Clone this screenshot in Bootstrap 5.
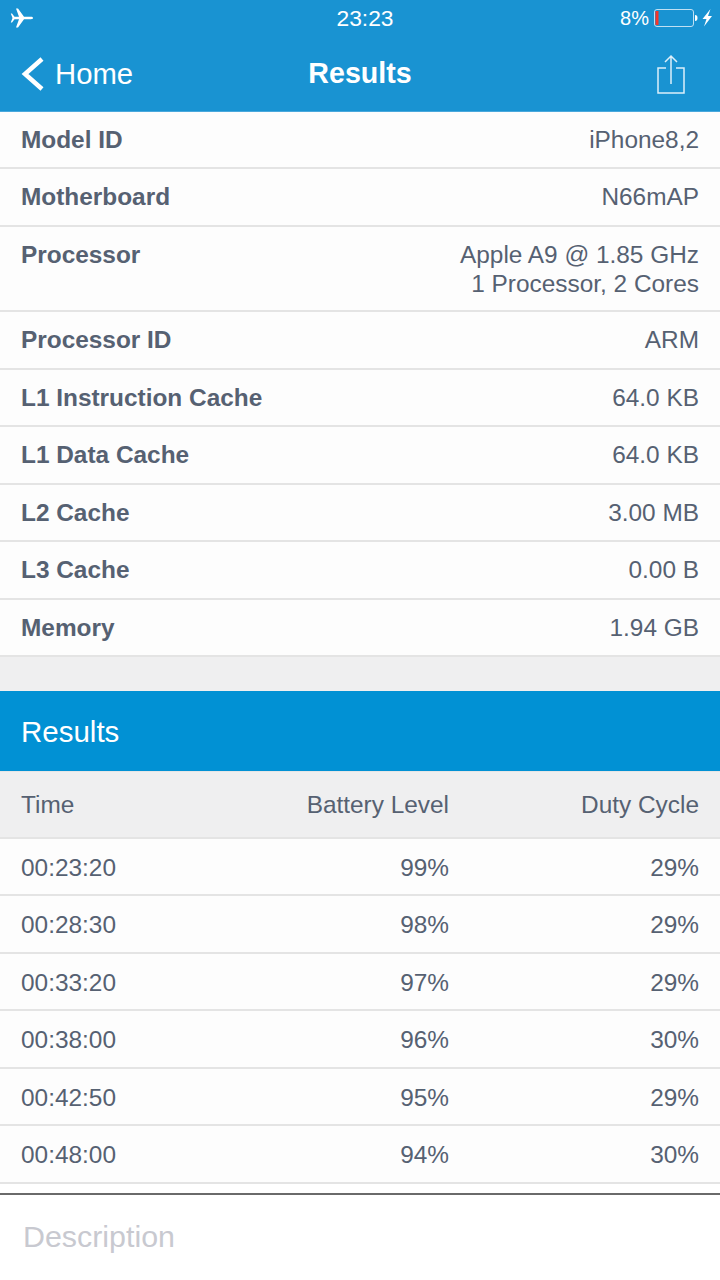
<!DOCTYPE html>
<html lang="en">
<head>
<meta charset="utf-8">
<title>Results</title>
<link rel="stylesheet" href="https://cdn.jsdelivr.net/npm/bootstrap@5.3.0/dist/css/bootstrap.min.css">
<style>
html,body{margin:0;height:1280px;overflow:hidden}
body{width:720px;background:#fff;font-family:"Liberation Sans",Arial,sans-serif;font-size:24.4px;color:#566172}
.top-head{height:112px;background:#1993d2;color:#fff;border-bottom:1px solid #4aa8dc}
.status-line{height:36px;padding:0 8px 0 10px;font-size:20px;line-height:36px}
.status-line>*{flex:1 1 0}
.clock-text{font-size:22.8px;margin-left:8px}
.nav-line{height:75px;padding:0 21px;font-size:28px}
.nav-line>*{flex:1 1 0}
.home-text{font-size:29.3px;margin-left:10px}
.head-title{font-weight:700;font-size:28.6px;text-align:center}
.share-icon{margin-right:13px}
.batt-icon{margin-left:5px}
.info-row{padding:0 21px;height:57.45px;line-height:56.6px;background:#fdfdfd;border-bottom:2px solid #e4e4e4}
.info-row.tall{height:85.5px}
.info-row .lbl{font-weight:700}
.info-row .two-line{line-height:28.5px;padding-top:14.5px;text-align:right}
.gap-band{height:34.4px;background:#efeff0}
.section-blue{height:80px;background:#0191d4;color:#fff;font-size:29.5px;line-height:81px;padding:0 21px}
.cols-row{display:flex;padding:0 21px;height:57.45px;line-height:57.5px;background:#fdfdfd;border-bottom:2px solid #e4e4e4}
.cols-row.head-row{height:67.5px;line-height:66px;background:#efeff0;border-top:1px solid #e6e6e6}
.c-time{width:178px}
.c-val{width:250px;text-align:right}
.desc-box{height:86px;margin-top:9.5px;border-top:2px solid #6a6a6a;background:#fff;padding:20px 23px 0;font-size:30.4px;line-height:42px;color:#c8c9d0}
svg{display:block}
</style>
</head>
<body>
<header class="top-head">
  <div class="status-line d-flex align-items-center">
    <div><svg width="24" height="20" viewBox="0 0 24 20" fill="#fff"><path d="M23 10c0-.8-1-1.200-2-1.200h-7L8 .5H6l3 8.300H4.500L2 5.500H.8L2.500 10 .8 14.500H2l2.500-3.300H9l-3 8.300h2l6-8.300h7c1 0 2-.4 2-1.200z"/></svg></div>
    <div class="clock-text text-center">23:23</div>
    <div class="d-flex justify-content-end align-items-center">
      <span>8%</span>
      <svg class="batt-icon" width="58" height="18" viewBox="0 0 58 18"><rect x=".5" y=".5" width="39" height="17" rx="2.500" fill="none" stroke="#bfe0f3" stroke-width="1"/><rect x="1.500" y="2" width="3" height="14" fill="#f5352a"/><path d="M41 6c1.800 0 2.500 1 2.500 3s-.7 3-2.500 3z" fill="#fff"/><path d="M56.500 0l-8 10h4L50 17.500l8-10.500h-4z" fill="#fff"/></svg>
    </div>
  </div>
  <div class="nav-line d-flex align-items-center">
    <div class="d-flex align-items-center">
      <svg width="24" height="36" viewBox="0 0 24 36"><path d="M21 3L4 18l17 15" fill="none" stroke="#fff" stroke-width="4.500"/></svg>
      <span class="home-text">Home</span>
    </div>
    <div class="head-title">Results</div>
    <div class="d-flex justify-content-end">
      <svg class="share-icon" width="30" height="40" viewBox="0 0 30 40" fill="none" stroke="#dceffa" stroke-width="1.500"><path d="M10 14H2v25h26V14h-8"/><path d="M15 30V2M9 8l6-6 6 6"/></svg>
    </div>
  </div>
</header>
<main>
  <div class="info-row d-flex justify-content-between"><span class="lbl">Model ID</span><span>iPhone8,2</span></div>
  <div class="info-row d-flex justify-content-between"><span class="lbl">Motherboard</span><span>N66mAP</span></div>
  <div class="info-row tall d-flex justify-content-between"><span class="lbl">Processor</span><div class="two-line">Apple A9 @ 1.85 GHz<br>1 Processor, 2 Cores</div></div>
  <div class="info-row d-flex justify-content-between"><span class="lbl">Processor ID</span><span>ARM</span></div>
  <div class="info-row d-flex justify-content-between"><span class="lbl">L1 Instruction Cache</span><span>64.0 KB</span></div>
  <div class="info-row d-flex justify-content-between"><span class="lbl">L1 Data Cache</span><span>64.0 KB</span></div>
  <div class="info-row d-flex justify-content-between"><span class="lbl">L2 Cache</span><span>3.00 MB</span></div>
  <div class="info-row d-flex justify-content-between"><span class="lbl">L3 Cache</span><span>0.00 B</span></div>
  <div class="info-row d-flex justify-content-between"><span class="lbl">Memory</span><span>1.94 GB</span></div>
  <div class="gap-band"></div>
  <div class="section-blue">Results</div>
  <div class="cols-row head-row"><div class="c-time">Time</div><div class="c-val">Battery Level</div><div class="c-val">Duty Cycle</div></div>
  <div class="cols-row"><div class="c-time">00:23:20</div><div class="c-val">99%</div><div class="c-val">29%</div></div>
  <div class="cols-row"><div class="c-time">00:28:30</div><div class="c-val">98%</div><div class="c-val">29%</div></div>
  <div class="cols-row"><div class="c-time">00:33:20</div><div class="c-val">97%</div><div class="c-val">29%</div></div>
  <div class="cols-row"><div class="c-time">00:38:00</div><div class="c-val">96%</div><div class="c-val">30%</div></div>
  <div class="cols-row"><div class="c-time">00:42:50</div><div class="c-val">95%</div><div class="c-val">29%</div></div>
  <div class="cols-row"><div class="c-time">00:48:00</div><div class="c-val">94%</div><div class="c-val">30%</div></div>
  <div class="desc-box">Description</div>
</main>
<script src="https://cdn.jsdelivr.net/npm/bootstrap@5.3.0/dist/js/bootstrap.bundle.min.js"></script>
</body>
</html>
